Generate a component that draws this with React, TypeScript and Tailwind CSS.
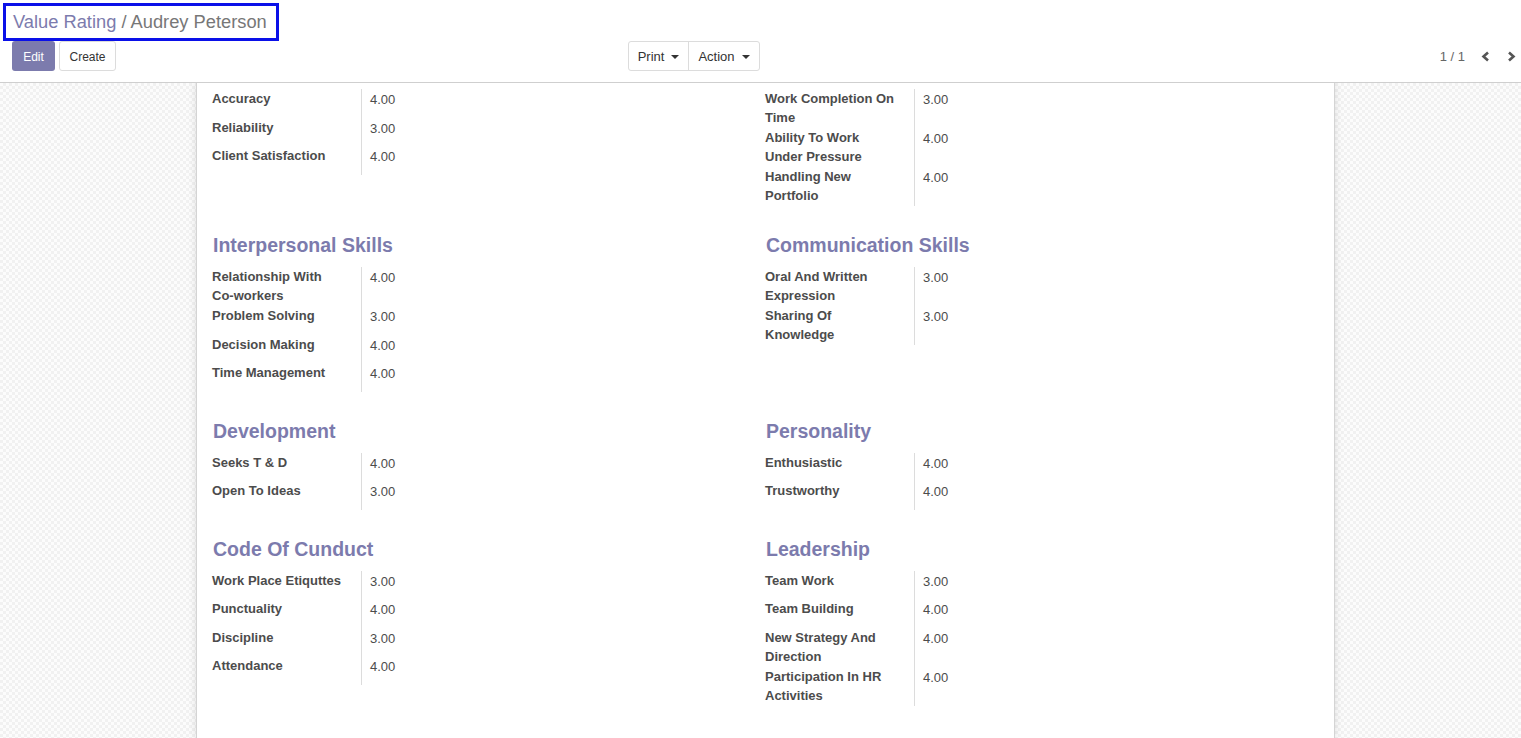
import React from "react";

type Row = [string, string];
type Col = { title?: string; rows: Row[] };

const sections: { left: Col; right: Col }[] = [
  {
    left: {
      rows: [
        ["Accuracy", "4.00"],
        ["Reliability", "3.00"],
        ["Client Satisfaction", "4.00"],
      ],
    },
    right: {
      rows: [
        ["Work Completion On Time", "3.00"],
        ["Ability To Work Under Pressure", "4.00"],
        ["Handling New Portfolio", "4.00"],
      ],
    },
  },
  {
    left: {
      title: "Interpersonal Skills",
      rows: [
        ["Relationship With Co-workers", "4.00"],
        ["Problem Solving", "3.00"],
        ["Decision Making", "4.00"],
        ["Time Management", "4.00"],
      ],
    },
    right: {
      title: "Communication Skills",
      rows: [
        ["Oral And Written Expression", "3.00"],
        ["Sharing Of Knowledge", "3.00"],
      ],
    },
  },
  {
    left: {
      title: "Development",
      rows: [
        ["Seeks T & D", "4.00"],
        ["Open To Ideas", "3.00"],
      ],
    },
    right: {
      title: "Personality",
      rows: [
        ["Enthusiastic", "4.00"],
        ["Trustworthy", "4.00"],
      ],
    },
  },
  {
    left: {
      title: "Code Of Cunduct",
      rows: [
        ["Work Place Etiquttes", "3.00"],
        ["Punctuality", "4.00"],
        ["Discipline", "3.00"],
        ["Attendance", "4.00"],
      ],
    },
    right: {
      title: "Leadership",
      rows: [
        ["Team Work", "3.00"],
        ["Team Building", "4.00"],
        ["New Strategy And Direction", "4.00"],
        ["Participation In HR Activities", "4.00"],
      ],
    },
  },
];

function Caret() {
  return (
    <span className="ml-[7px] inline-block h-0 w-0 border-x-[4px] border-t-[4px] border-x-transparent border-t-[#333]" />
  );
}

function GroupCol({ col }: { col: Col }) {
  return (
    <div className="flex w-[553px] flex-col">
      {col.title && (
        <div className="mb-[9px] mt-[26px] h-[26px] pl-[1px] text-[19.5px] font-bold leading-[26px] text-[#7c7bad]">
          {col.title}
        </div>
      )}
      <div className="flex flex-col">
        {col.rows.map(([label, value]) => (
          <div key={label} className="flex min-h-[28.5px]">
            <div className="w-[150px] shrink-0 border-r border-[#dcdcdc] pb-[1px] pr-[15px] text-[13px] font-bold leading-[19px] text-[#4c4c4c]">
              {label}
            </div>
            <div className="pl-[8px] pt-[1px] text-[13px] leading-[19px] text-[#4c4c4c]">
              {value}
            </div>
          </div>
        ))}
      </div>
    </div>
  );
}

export default function App() {
  return (
    <div
      className="flex h-[738px] w-[1521px] flex-col overflow-hidden bg-white"
      style={{ fontFamily: '"Liberation Sans", Arial, sans-serif' }}
    >
      {/* Control panel */}
      <div className="shrink-0 border-b border-[#cfcfcf] bg-white pb-[11px]">
        <div className="h-[41px] pl-[3px] pt-[3px]">
          <div className="inline-flex h-[38px] items-center border-[3px] border-[#0a10e8] pl-[7px] pr-[9px] text-[18.3px] leading-none">
            <span className="text-[#7c7bad]">Value Rating</span>
            <span className="whitespace-pre text-[#777777]"> / Audrey Peterson</span>
          </div>
        </div>
        <div className="flex h-[30px] items-center pl-[12px]">
          <div className="flex w-[616px] items-center gap-[4px]">
            <button className="flex h-[30px] w-[43px] items-center justify-center rounded-[3px] bg-[#7c7bad] pt-[1px] text-[12px] text-white">
              Edit
            </button>
            <button className="flex h-[30px] w-[57px] items-center justify-center rounded-[3px] border border-[#dcdcdc] bg-white pt-[1px] text-[12px] text-[#333]">
              Create
            </button>
          </div>
          <div className="flex h-[30px] items-stretch rounded-[3px] border border-[#dcdcdc]">
            <button className="flex w-[59px] items-center justify-center pt-[1px] text-[13px] text-[#333]">
              Print
              <Caret />
            </button>
            <button className="flex w-[71px] items-center justify-center border-l border-[#dcdcdc] pt-[1px] text-[13px] text-[#333]">
              Action
              <Caret />
            </button>
          </div>
          <div className="ml-auto flex items-center pr-[5px] pt-[1px]">
            <span className="text-[13px] text-[#666]">1 / 1</span>
            <svg className="ml-[16px]" width="9" height="11" viewBox="0 0 9 11">
              <polyline points="7,1.5 2.5,5.5 7,9.5" fill="none" stroke="#555" strokeWidth="2.6" />
            </svg>
            <svg className="ml-[17px]" width="9" height="11" viewBox="0 0 9 11">
              <polyline points="2,1.5 6.5,5.5 2,9.5" fill="none" stroke="#555" strokeWidth="2.6" />
            </svg>
          </div>
        </div>
      </div>

      {/* Content */}
      <div className="flex-1 overflow-hidden bg-[#f8f8f8] bg-[repeating-conic-gradient(#f1f1f1_0%_25%,#fcfcfc_0%_50%)] bg-[length:6px_6px]">
        <div className="ml-[196px] h-full w-[1139px] border-x border-[#d4d4d4] bg-white pl-[15px] pt-[6px] shadow-[0_0_8px_rgba(0,0,0,0.12)]">
          {sections.map((s, i) => (
            <div key={i} className="flex">
              <GroupCol col={s.left} />
              <GroupCol col={s.right} />
            </div>
          ))}
        </div>
      </div>
    </div>
  );
}
